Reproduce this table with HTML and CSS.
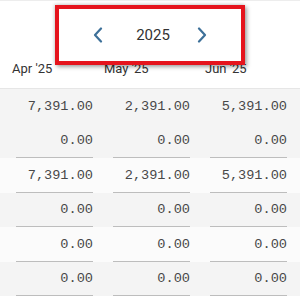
FILE: index.html
```html
<!DOCTYPE html>
<html>
<head>
<meta charset="utf-8">
<link rel="stylesheet" href="styles.css">
</head>
<body>
<div class="page">
  <div class="year-nav">
    <svg class="chev prev" width="12" height="16" viewBox="0 0 12 16"><path d="M9 1.5 L3 8 L9 14.5" fill="none" stroke="#3d7099" stroke-width="2.2" stroke-linecap="round" stroke-linejoin="round"/></svg>
    <span class="year">2025</span>
    <svg class="chev next" width="12" height="16" viewBox="0 0 12 16"><path d="M3 1.5 L9 8 L3 14.5" fill="none" stroke="#3d7099" stroke-width="2.2" stroke-linecap="round" stroke-linejoin="round"/></svg>
  </div>
  <div class="head-row">
    <span class="h1">Apr '25</span>
    <span class="h2">May '25</span>
    <span class="h3">Jun '25</span>
  </div>
  <div class="table">
    <div class="row shade first"><div class="cell">7,391.00</div><div class="cell">2,391.00</div><div class="cell">5,391.00</div></div>
    <div class="row shade"><div class="cell">0.00</div><div class="cell">0.00</div><div class="cell">0.00</div></div>
    <div class="row"><div class="cell">7,391.00</div><div class="cell">2,391.00</div><div class="cell">5,391.00</div></div>
    <div class="row shade"><div class="cell">0.00</div><div class="cell">0.00</div><div class="cell">0.00</div></div>
    <div class="row"><div class="cell">0.00</div><div class="cell">0.00</div><div class="cell">0.00</div></div>
    <div class="row shade"><div class="cell">0.00</div><div class="cell">0.00</div><div class="cell">0.00</div></div>
  </div>
  <div class="highlight"></div>
</div>
</body>
</html>
```
FILE: styles.css
```css
html, body {
  margin: 0;
  padding: 0;
  background: #ffffff;
}
.page {
  position: relative;
  width: 300px;
  height: 298px;
  overflow: hidden;
  border-top: 1px solid #ededed;
  box-sizing: border-box;
}
.year-nav {
  height: 50px;
  padding-top: 9px;
  display: flex;
  justify-content: center;
  align-items: center;
}
.chev {
  display: block;
}
.chev.prev {
  margin-right: 32px;
}
.chev.next {
  margin-left: 26px;
}
.year {
  font-family: Roboto, "Liberation Sans", sans-serif;
  font-size: 15px;
  color: #333333;
  width: 34px;
  text-align: center;
}
.head-row {
  height: 27px;
  padding-top: 1px;
  display: flex;
  font-family: Roboto, "Liberation Sans", sans-serif;
  font-size: 13px;
  line-height: 16px;
  color: #333333;
}
.h1 { margin-left: 12px; width: 92px; }
.h2 { width: 101px; }
.table {
  border-top: 1px solid #e6e6e6;
}
.row {
  display: grid;
  grid-template-columns: 97px 97px 97px;
  padding-left: 6px;
  height: 34.5px;
  background: #fbfbfb;
}
.row.shade {
  background: #f4f4f4;
}
.cell {
  margin: 0 10px;
  display: flex;
  align-items: center;
  justify-content: flex-end;
  border-bottom: 1.5px solid #bdbdbd;
  font-family: "Liberation Mono", monospace;
  font-size: 13.6px;
  color: #484848;
  padding-top: 1px;
}
.row.first .cell {
  border-bottom-color: transparent;
}
.highlight {
  position: absolute;
  left: 55px;
  top: 4px;
  width: 190px;
  height: 60px;
  box-sizing: border-box;
  border: 4px solid #e5141d;
  box-shadow: 2px 2px 4px rgba(0, 0, 0, 0.35), -1px -1px 3px rgba(0, 0, 0, 0.15);
}
```
